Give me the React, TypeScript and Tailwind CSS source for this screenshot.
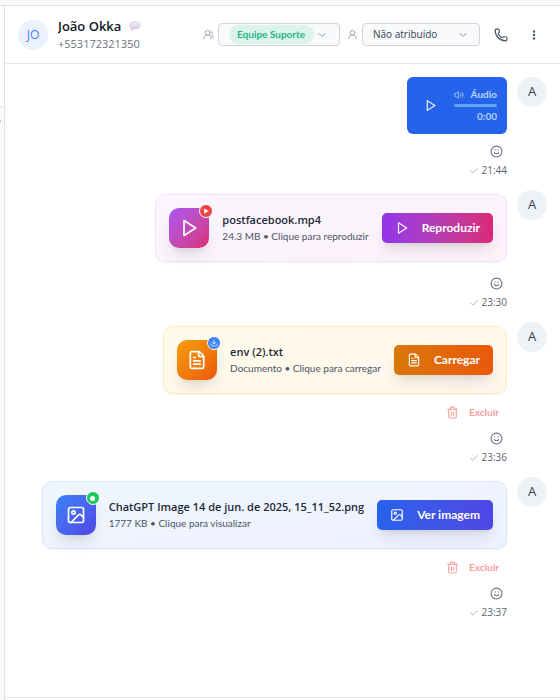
import type { ReactNode } from "react";
import {
  Check,
  ChevronDown,
  Download,
  EllipsisVertical,
  FileText,
  Image as ImageIcon,
  Phone,
  Smile,
  Trash2,
  UserRound,
  UsersRound,
  Volume2,
} from "lucide-react";

function PlayIcon({ className }: { className: string }) {
  return (
    <svg viewBox="0 0 24 24" className={className} fill="none" stroke="currentColor" strokeWidth="2" strokeLinejoin="round" aria-hidden="true">
      <polygon points="6 3 20 12 6 21 6 3" />
    </svg>
  );
}

function SpeechBalloon() {
  return (
    <svg viewBox="0 0 24 20" className="h-[10px] w-3" aria-hidden="true">
      <defs>
        <linearGradient id="balloon" x1="0" y1="0" x2="0" y2="1">
          <stop offset="0" stopColor="#f3ecf9" />
          <stop offset="1" stopColor="#d3c4e3" />
        </linearGradient>
      </defs>
      <path
        d="M12 1C5.5 1 1 4.200 1 8.500c0 2.700 1.500 4.800 4.200 6.200 0 1.700-.4 2.900-1 4.100 2.600-.2 4.500-1.200 5.800-2.900l2 .1c6.500 0 11-3.200 11-7.500S18.500 1 12 1Z"
        fill="url(#balloon)"
        stroke="#c9bada"
        strokeWidth="1"
      />
    </svg>
  );
}

function Message({ time, removable = false, children }: { time: string; removable?: boolean; children: ReactNode }) {
  return (
    <li className="flex items-start justify-end gap-[10px]">
      <div className="flex min-w-0 flex-col items-end">
        {children}
        {removable && (
          <button type="button" className="mt-[5px] flex h-[18px] items-center gap-[10px] pr-2 text-[10px] font-bold text-[#f99b9b]">
            <Trash2 className="size-[13px]" strokeWidth={2} />
            Excluir
          </button>
        )}
        <button type="button" aria-label="Reagir" className="mt-[5px] flex h-6 items-center pr-1 text-[#6b7280]">
          <Smile className="size-[13px]" strokeWidth={2} />
        </button>
        <div className="flex h-[15px] items-center gap-[3px] font-['Open_Sans',sans-serif] text-[10px] text-[#5b6472]">
          <Check className="size-[10px] text-[#9ca3af]" strokeWidth={2} />
          <time>{time}</time>
        </div>
      </div>
      <div className="flex size-[30px] shrink-0 items-center justify-center rounded-full bg-[#edf2f7] font-['Open_Sans',sans-serif] text-[13px] text-[#374151]">
        A
      </div>
    </li>
  );
}

type FileCardProps = {
  card: string;
  tile: string;
  action: string;
  icon: ReactNode;
  badge: ReactNode;
  actionIcon: ReactNode;
  name: string;
  detail: string;
  label: string;
};

function FileCard({ card, tile, action, icon, badge, actionIcon, name, detail, label }: FileCardProps) {
  return (
    <article className={`my-1 flex max-w-full items-center gap-[13px] rounded-[10px] border bg-linear-to-br p-[13px] shadow-xs ${card}`}>
      <div className={`relative flex size-10 shrink-0 items-center justify-center rounded-[10px] bg-linear-to-br text-white shadow-lg ${tile}`}>
        {icon}
        {badge}
      </div>
      <div className="min-w-0">
        <h2 className="truncate font-['Open_Sans',sans-serif] text-[11px] leading-4 font-semibold text-[#1f2937]">{name}</h2>
        <p className="truncate text-[10px] leading-4 text-[#4b5563]">{detail}</p>
      </div>
      <button
        type="button"
        className={`flex h-[30px] shrink-0 items-center gap-[13px] rounded-[5px] bg-linear-to-r px-[13px] text-[12px] font-bold text-white shadow-lg ${action}`}
      >
        {actionIcon}
        {label}
      </button>
    </article>
  );
}

const badgeBase = "absolute -top-1 -right-1 flex size-[14px] items-center justify-center rounded-full border border-white text-white";

export default function App() {
  return (
    <div className="flex h-screen flex-col overflow-hidden bg-[#f9f9fa] font-['Lato','Noto_Sans',sans-serif] text-[#111827]">
      <div className="h-[6px] shrink-0 border-b border-[#e2e2e4] bg-[#f8f8f8]" />
      <div className="flex min-h-0 flex-1">
        <aside className="flex w-1 shrink-0 flex-col">
          <div className="h-[101px] border-b border-[#e5e7eb] bg-white" />
          <div className="mt-[13px] h-[2px] w-px bg-[#c4c4c4]" />
        </aside>
        <main className="flex min-w-0 flex-1 flex-col border-l border-[#e1e2e8] bg-white">
          <header className="flex h-[58px] shrink-0 items-center border-b border-[#e5e7eb] pr-5 pl-[13px]">
            <div className="flex size-[30px] shrink-0 items-center justify-center rounded-full bg-[#ebf2fe] font-['Open_Sans',sans-serif] text-[12px] text-[#3b82f6]">
              JO
            </div>
            <div className="ml-[10px] min-w-0 flex-1 font-['Open_Sans',sans-serif]">
              <div className="flex items-center gap-2">
                <h1 className="truncate text-[13px] leading-[18px] font-semibold">João Okka</h1>
                <SpeechBalloon />
              </div>
              <p className="truncate text-[11px] leading-[18px] text-[#6b7280]">+553172321350</p>
            </div>

            <label htmlFor="team" aria-label="Equipe" className="mr-1 text-[#9ca3af]">
              <UsersRound className="size-[11px]" />
            </label>
            <div className="flex h-[23px] w-[122px] items-center rounded-[4px] border border-[#d1d5db] bg-[#f9fafb] pl-[10px]">
              <select id="team" className="h-[19px] w-[85px] appearance-none rounded-full bg-[#dcf3ec] px-2 text-[10px] font-bold text-[#1eb583]">
                <option>Equipe Suporte</option>
              </select>
              <ChevronDown className="pointer-events-none ml-[2px] size-3 text-[#8b93a1]" />
            </div>
            <label htmlFor="agent" aria-label="Atendente" className="mr-1 ml-[7px] text-[#9ca3af]">
              <UserRound className="size-[11px]" />
            </label>
            <div className="grid h-[23px] w-[118px] items-center rounded-[4px] border border-[#d1d5db] bg-[#f9fafb]">
              <select id="agent" className="col-start-1 row-start-1 h-full appearance-none px-[10px] font-['Open_Sans',sans-serif] text-[10px] text-[#374151]">
                <option>Não atribuído</option>
              </select>
              <ChevronDown className="pointer-events-none col-start-1 row-start-1 mr-[10px] size-3 justify-self-end text-[#8b93a1]" />
            </div>
            <button type="button" aria-label="Ligar" className="ml-[14px] text-[#475569]">
              <Phone className="size-[14px]" />
            </button>
            <button type="button" aria-label="Mais opções" className="ml-5 text-[#475569]">
              <EllipsisVertical className="size-3" strokeWidth={3} />
            </button>
          </header>

          <ul className="flex min-h-0 flex-1 flex-col gap-3 overflow-hidden pt-[13px] pr-[13px] pl-[13px]">
            <Message time="21:44">
              <div className="flex h-[57px] w-[100px] items-center rounded-[6px] bg-[#2563eb] px-[10px] text-white">
                <button type="button" aria-label="Reproduzir áudio" className="ml-[7px]">
                  <PlayIcon className="size-[13px]" />
                </button>
                <div className="ml-auto w-[43px] text-[10px] font-bold text-[#b9d3fe]">
                  <div className="flex h-[15px] items-center justify-between">
                    <Volume2 className="size-[10px]" />
                    Áudio
                  </div>
                  <div className="my-[2px] h-[3px] rounded-full bg-[#60a5fa]" />
                  <div className="h-[15px] text-right leading-[15px]">0:00</div>
                </div>
              </div>
            </Message>

            <Message time="23:30">
              <FileCard
                card="from-[#faf5ff] to-[#fdf2f8] border-[#f0e2fe]"
                tile="from-[#a855f7] to-[#db2777]"
                action="from-[#9333ea] to-[#db2777]"
                icon={<PlayIcon className="size-5" />}
                badge={
                  <span className={`${badgeBase} bg-[#ef4444]`}>
                    <svg viewBox="0 0 8 8" className="size-[6px]" aria-hidden="true">
                      <path d="M1.500 0.500 7.500 4 1.500 7.500Z" fill="currentColor" />
                    </svg>
                  </span>
                }
                actionIcon={<PlayIcon className="size-[14px]" />}
                name="postfacebook.mp4"
                detail="24.3 MB • Clique para reproduzir"
                label="Reproduzir"
              />
            </Message>

            <Message time="23:36" removable>
              <FileCard
                card="from-[#fffbeb] to-[#fff7ed] border-[#fdeeb4]"
                tile="from-[#f59e0b] to-[#ea580c]"
                action="from-[#d97706] to-[#ea580c]"
                icon={<FileText className="size-5" />}
                badge={
                  <span className={`${badgeBase} bg-[#3b82f6]`}>
                    <Download className="size-[8px]" />
                  </span>
                }
                actionIcon={<FileText className="size-[14px]" />}
                name="env (2).txt"
                detail="Documento • Clique para carregar"
                label="Carregar"
              />
            </Message>

            <Message time="23:37" removable>
              <FileCard
                card="from-[#eff6ff] to-[#eef2ff] border-[#d7e6fc]"
                tile="from-[#3b82f6] to-[#4f46e5]"
                action="from-[#2563eb] to-[#4f46e5]"
                icon={<ImageIcon className="size-5" />}
                badge={
                  <span className={`${badgeBase} bg-[#22c55e]`}>
                    <span className="size-[5px] rounded-full bg-white" />
                  </span>
                }
                actionIcon={<ImageIcon className="size-[14px]" />}
                name="ChatGPT Image 14 de jun. de 2025, 15_11_52.png"
                detail="1777 KB • Clique para visualizar"
                label="Ver imagem"
              />
            </Message>
          </ul>
          <footer className="h-[3px] shrink-0 border-t border-[#e5e7eb]" />
        </main>
      </div>
    </div>
  );
}
